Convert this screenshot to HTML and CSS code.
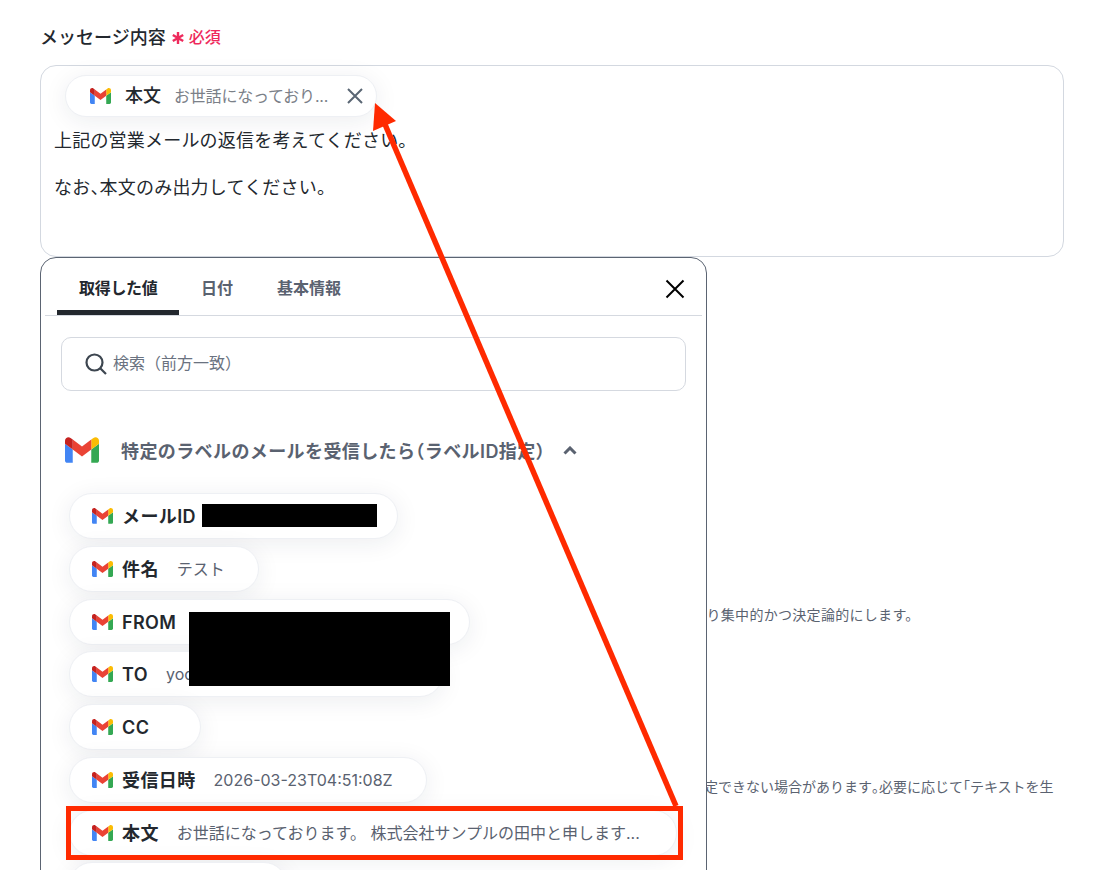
FILE: index.html
```html
<!DOCTYPE html>
<html lang="ja">
<head>
<meta charset="utf-8">
<title>メッセージ内容</title>
<link rel="stylesheet" href="styles.css">
</head>
<body>
<svg class="defs" width="0" height="0" aria-hidden="true">
  <symbol id="gmail" viewBox="52 42 88 66">
    <path fill="#4285f4" d="M58 108h14V74L52 59v43c0 3.32 2.69 6 6 6"/>
    <path fill="#34a853" d="M120 108h14c3.32 0 6-2.69 6-6V59l-20 15"/>
    <path fill="#fbbc04" d="M120 48v26l20-15v-8c0-7.42-8.47-11.65-14.4-7.2"/>
    <path fill="#ea4335" d="M72 74V48l24 18 24-18v26L96 92"/>
    <path fill="#c5221f" d="M52 51v8l20 15V48l-5.6-4.2c-5.94-4.45-14.4-.22-14.4 7.2"/>
  </symbol>
</svg>
<main class="page">
  <div class="field-label">
    <span>メッセージ内容</span>
    <svg class="req-star" viewBox="0 0 12 12"><path d="M6 0v12M.8 3l10.4 6M11.2 3L.8 9"/></svg>
    <span class="req-text">必須</span>
  </div>
  <div class="field">
    <div class="editor">
      <div class="token">
        <svg class="gm gm-token"><use href="#gmail"/></svg>
        <span class="token-name">本文</span>
        <span class="token-value">お世話になっており...</span>
        <svg class="token-x" viewBox="0 0 16 16"><path d="M1 1l14 14M15 1L1 15"/></svg>
      </div>
      <p class="editor-line">上記の営業メールの返信を考えてください。</p>
      <p class="editor-line">なお<span class="tight">、</span>本文のみ出力してください。</p>
    </div>
    <section class="popover">
      <div class="tabs">
        <div class="tab tab-active">取得した値</div>
        <div class="tab">日付</div>
        <div class="tab">基本情報</div>
        <svg class="pop-x" viewBox="0 0 20 20"><path d="M1.5 1.5l17 17M18.5 1.5l-17 17"/></svg>
      </div>
      <div class="search">
        <svg class="search-ico" viewBox="0 0 22 22"><circle cx="9.5" cy="9.5" r="8"/><path d="M15.5 15.5l5.5 5.5"/></svg>
        <span class="search-text">検索（前方一致）</span>
      </div>
      <div class="group-head">
        <svg class="gm gm-large"><use href="#gmail"/></svg>
        <span class="group-title">特定のラベルのメールを受信したら<span class="tight">（</span>ラベルID指定）</span>
        <svg class="chev" viewBox="0 0 14 9"><path d="M1.5 7.5L7 2l5.5 5.5"/></svg>
      </div>
      <div class="chips">
        <div class="chip chip-id"><svg class="gm"><use href="#gmail"/></svg><span class="chip-name">メールID</span></div>
        <div class="chip chip-subject"><svg class="gm"><use href="#gmail"/></svg><span class="chip-name">件名</span><span class="chip-value">テスト</span></div>
        <div class="chip chip-from"><svg class="gm"><use href="#gmail"/></svg><span class="chip-name">FROM</span></div>
        <div class="chip chip-to"><svg class="gm"><use href="#gmail"/></svg><span class="chip-name">TO</span><span class="chip-value">yoo</span></div>
        <div class="chip chip-cc"><svg class="gm"><use href="#gmail"/></svg><span class="chip-name">CC</span></div>
        <div class="chip chip-date"><svg class="gm"><use href="#gmail"/></svg><span class="chip-name">受信日時</span><span class="chip-value">2026-03-23T04:51:08Z</span></div>
        <div class="chip chip-body"><svg class="gm"><use href="#gmail"/></svg><span class="chip-name">本文</span><span class="chip-value">お世話になっております。 株式会社サンプルの田中と申します...</span></div>
        <div class="chip chip-next"></div>
      </div>
    </section>
  </div>
  <p class="hint hint-one">り集中的かつ決定論的にします。</p>
  <p class="hint hint-two">定できない場合があります<span class="tight">。</span>必要に応じて<span class="tight">「</span>テキストを生</p>
</main>
<div class="redact redact-id"></div>
<div class="redact redact-from"></div>
<svg class="annotation" viewBox="0 0 1098 870">
  <path class="arrow-line" d="M676 806L384 122"/>
  <path class="arrow-head" d="M375 103L373 131L396 121Z"/>
  <rect class="arrow-box" x="68.5" y="808.5" width="612" height="49"/>
</svg>
</body>
</html>
```
FILE: styles.css
```css
* { box-sizing: border-box; }
html, body {
  margin: 0;
  height: 870px;
  overflow: hidden;
  background: #fff;
}
body {
  position: relative;
  font-family: Inter, "Noto Sans CJK JP", sans-serif;
  color: #23282e;
}
.tight { font-feature-settings: "halt"; }
.defs { position: absolute; }
.page { padding: 24px 34px 0 40px; }

.field-label {
  display: flex;
  align-items: center;
  height: 23px;
  font-size: 18px;
  font-weight: 500;
  margin-bottom: 18px;
}
.req-star {
  width: 12px;
  height: 12px;
  margin: 5px 5px 0 6px;
  fill: none;
  stroke: #ee2a5c;
  stroke-width: 2.4;
}
.req-text { color: #ee2a5c; font-size: 16px; margin-top: 1px; }

.field { position: relative; }
.editor {
  height: 192px;
  border: 1px solid #d3d8e0;
  border-radius: 16px;
  padding: 9px 13px;
}
.token {
  display: flex;
  align-items: center;
  width: 312px;
  height: 42px;
  margin-left: 11px;
  padding-left: 24px;
  background: #fff;
  border: 1px solid #eef0f4;
  border-radius: 21px;
  box-shadow: 0 4px 24px rgba(30, 40, 60, .08);
}
.gm { width: 21px; height: 16px; flex: none; }
.gm-token { margin-right: 14px; }
.token-name { font-size: 18px; font-weight: 500; margin-right: 13px; line-height: 1; }
.token-value { font-size: 16px; color: #7b8088; width: 152px; white-space: nowrap; line-height: 1; letter-spacing: -.2px; }
.token-x {
  width: 16px;
  height: 16px;
  margin-left: 21px;
  fill: none;
  stroke: #5a6674;
  stroke-width: 2;
}
.editor-line {
  margin: 0;
  height: 47px;
  line-height: 47px;
  font-size: 18px;
  letter-spacing: .2px;
}

.popover {
  position: absolute;
  z-index: 2;
  left: 0;
  top: 192px;
  width: 667px;
  height: 720px;
  padding: 0 4px;
  background: #fff;
  border: 1px solid #5b6472;
  border-radius: 16px;
}
.tabs {
  display: flex;
  align-items: stretch;
  position: relative;
  height: 58px;
  padding-left: 12px;
  border-bottom: 1px solid #d5d9e0;
}
.tab {
  padding: 0 22px;
  line-height: 60px;
  font-size: 16px;
  font-weight: 600;
  color: #5a6270;
}
.tab-active {
  width: 122px;
  padding: 0 0 0 22px;
  color: #23282e;
  letter-spacing: -.3px;
  border-bottom: 5px solid #23282e;
  border-radius: 6px 6px 0 0;
}
.pop-x {
  position: absolute;
  right: 17px;
  top: 21px;
  width: 20px;
  height: 20px;
  fill: none;
  stroke: #000;
  stroke-width: 2;
}

.search {
  display: flex;
  align-items: center;
  height: 54px;
  margin: 21px 16px 0;
  padding-left: 23px;
  border: 1px solid #d5d9e0;
  border-radius: 10px;
  font-size: 16px;
  color: #6a7280;
}
.search-text { line-height: 1; padding-bottom: 2px; }
.search-ico {
  width: 22px;
  height: 22px;
  margin-right: 6px;
  fill: none;
  stroke: #3d4650;
  stroke-width: 2.2;
}

.group-head {
  display: flex;
  align-items: center;
  height: 30px;
  margin: 44px 0 0 20px;
}
.gm-large { width: 34px; height: 26px; margin-right: 22px; }
.group-title { font-size: 18px; font-weight: 600; color: #5a6270; letter-spacing: .4px; }
.chev {
  width: 14px;
  height: 9px;
  margin-left: 9px;
  fill: none;
  stroke: #5a6270;
  stroke-width: 3;
}

.chips {
  display: flex;
  flex-direction: column;
  align-items: flex-start;
  gap: 6.75px;
  margin: 28px 0 0 24px;
}
.chip {
  display: flex;
  align-items: center;
  flex: none;
  height: 46px;
  padding-left: 22px;
  background: #fff;
  border: 1px solid #eef0f4;
  border-radius: 23px;
  box-shadow: 0 4px 24px rgba(30, 40, 60, .08);
  white-space: nowrap;
  overflow: hidden;
}
.chip .gm { margin-right: 9px; }
.chip-name { font-size: 18px; font-weight: 600; line-height: 1; letter-spacing: .4px; padding-top: 2px; }
.chip-value { margin-left: 18px; font-size: 16px; line-height: 1; color: #5a6270; }
.chip-id { width: 329px; }
.chip-subject { width: 190px; }
.chip-from { width: 401px; }
.chip-to { width: 374px; }
.chip-cc { width: 132px; }
.chip-date { width: 358px; }
.chip-body { width: 608px; }
.chip-next { width: 218px; }

.hint {
  margin: 0;
  font-size: 14px;
  line-height: 20px;
  color: #5a6270;
  white-space: nowrap;
}
.hint-one { margin: 348px 0 0 666.5px; letter-spacing: .3px; }
.hint-two { margin: 152px 0 0 664px; }

.redact { position: absolute; z-index: 3; background: #000; }
.redact-id { left: 202px; top: 504px; width: 175px; height: 23px; }
.redact-from { left: 189px; top: 612px; width: 261px; height: 74px; }

.annotation {
  position: absolute;
  z-index: 4;
  left: 0;
  top: 0;
  width: 1098px;
  height: 870px;
  pointer-events: none;
}
.arrow-line { stroke: #ff2a00; stroke-width: 5.5; fill: none; }
.arrow-head { fill: #ff2a00; }
.arrow-box { stroke: #ff2a00; stroke-width: 5; fill: none; }
```
